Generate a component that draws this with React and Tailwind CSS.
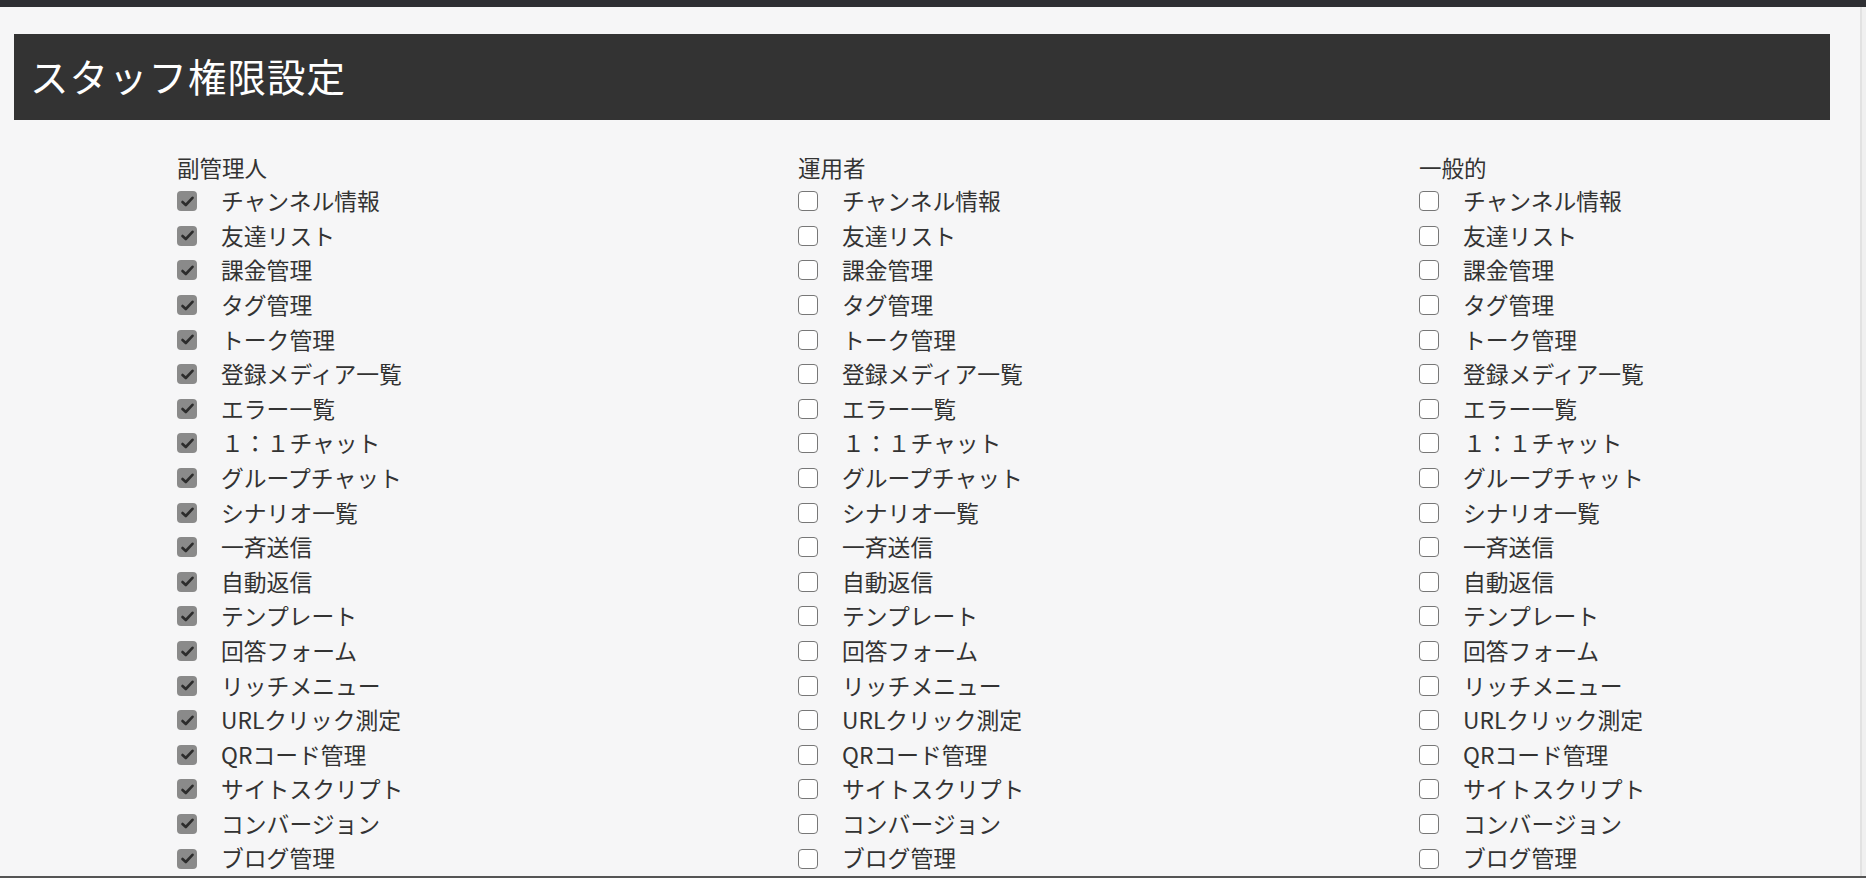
import React from 'react';

const items = [
    'チャンネル情報', '友達リスト', '課金管理', 'タグ管理', 'トーク管理', '登録メディア一覧',
    'エラー一覧', '１：１チャット', 'グループチャット', 'シナリオ一覧', '一斉送信', '自動返信',
    'テンプレート', '回答フォーム', 'リッチメニュー', 'URLクリック測定', 'QRコード管理',
    'サイトスクリプト', 'コンバージョン', 'ブログ管理',
];

const roles = [
    { id: 'sub', label: '副管理人', checked: true },
    { id: 'op', label: '運用者', checked: false },
    { id: 'gen', label: '一般的', checked: false },
];

const Box = ({ checked }) => (
    checked ? (
        <span className="w-[20px] h-[20px] rounded-[4px] bg-[#8a8a8a] flex items-center justify-center shrink-0">
            <svg width="13" height="11" viewBox="0 0 13 11" fill="none">
                <path d="M1.5 6 L4.8 9 L11.5 1.8" stroke="#2c2c2c" strokeWidth="2.6" strokeLinecap="round" strokeLinejoin="round" />
            </svg>
        </span>
    ) : (
        <span className="w-[20px] h-[20px] rounded-[4px] bg-white border-[1.5px] border-[#777] shrink-0" />
    )
);

const Column = ({ role }) => (
    <div className="flex flex-col">
        <div className="h-[33px] flex items-center text-[22.5px]">{role.label}</div>
        {items.map((item) => (
            <div key={item} className="h-[34.6px] flex items-center">
                <Box checked={role.checked} />
                <span className="ml-[24px] text-[22.8px] whitespace-nowrap">{item}</span>
            </div>
        ))}
    </div>
);

export default function App() {
    return (
        <div
            className="h-[878px] w-full overflow-hidden bg-[#f6f6f7] text-[#333] flex flex-col relative"
            style={{ fontFamily: '"Noto Sans CJK JP", "Noto Sans", sans-serif' }}
        >
            <div className="h-[7px] bg-[#2e2f33] shrink-0" />
            <div className="flex-1 flex min-h-0">
                <div className="flex-1 min-w-0 pl-[14px] pt-[27px]">
                    <div className="w-[1816px] h-[86px] bg-[#333] flex items-center pl-[16px] pb-[4px]">
                        <h1 className="text-[38.5px] text-white leading-none tracking-[1px]">スタッフ権限設定</h1>
                    </div>
                    <div className="grid grid-cols-[621px_621px_1fr] pl-[163px] pt-[31px]">
                        {roles.map((role) => (
                            <Column key={role.id} role={role} />
                        ))}
                    </div>
                </div>
                <div className="w-[6px] shrink-0 border-l-2 border-[#e2e2e2] bg-[#f0f0f0]" />
            </div>
            <div className="absolute left-0 right-0 bottom-0 h-[2px] bg-[#555]" />
        </div>
    );
}
